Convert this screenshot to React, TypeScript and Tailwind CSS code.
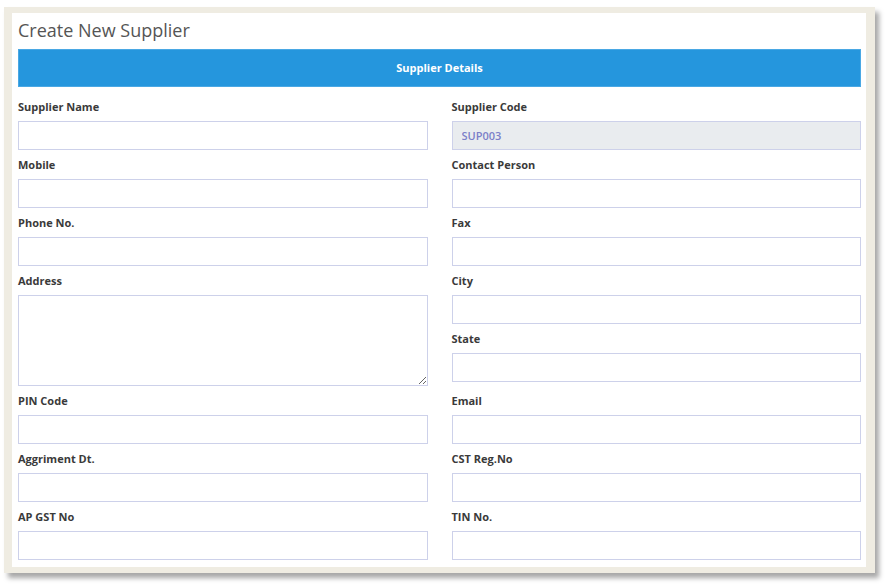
import React from "react";

function Field({ label, value, disabled }: { label: string; value?: string; disabled?: boolean }) {
  return (
    <div className="flex flex-col">
      <label className="mb-[6px] text-[11px] font-bold leading-[16px] text-[#3a3a3a]">{label}</label>
      <input
        readOnly
        value={value ?? ""}
        className={`h-[29px] w-full border border-[#cdd1ea] px-[9px] text-[11px] outline-none ${
          disabled ? "bg-[#e9ecef] font-semibold text-[#7b7fc8]" : "bg-white text-[#333]"
        }`}
      />
    </div>
  );
}

export default function App() {
  return (
    <div className="min-h-[586px] w-[890px] bg-white pl-[4px] pt-[7px]" style={{ fontFamily: '"Open Sans", "Liberation Sans", sans-serif' }}>
      <div className="h-[566px] w-[871px] bg-[#efece2] pb-[6px] pl-[8px] pr-[9px] pt-[6px] shadow-[4px_5px_5px_rgba(0,0,0,0.35)]">
        <div className="h-full w-full bg-white pl-[6px] pr-[5px]">
          <h1 className="h-[36px] text-[18px] leading-[35px] text-[#555]">Create New Supplier</h1>
          <div className="flex h-[38px] items-center justify-center border border-[#4aa8e4] bg-[#2596dd] text-[11px] font-bold text-white">
            Supplier Details
          </div>
          <div className="grid grid-cols-2 gap-x-[24px] gap-y-[7px] pt-[12px]">
            <Field label="Supplier Name" />
            <Field label="Supplier Code" value="SUP003" disabled />
            <Field label="Mobile" />
            <Field label="Contact Person" />
            <Field label="Phone No." />
            <Field label="Fax" />
            <div className="flex flex-col">
              <label className="mb-[6px] text-[11px] font-bold leading-[16px] text-[#3a3a3a]">Address</label>
              <textarea className="h-[91px] w-full border border-[#cdd1ea] bg-white outline-none" />
            </div>
            <div className="flex flex-col gap-[7px]">
              <Field label="City" />
              <Field label="State" />
            </div>
            <Field label="PIN Code" />
            <Field label="Email" />
            <Field label="Aggriment Dt." />
            <Field label="CST Reg.No" />
            <Field label="AP GST No" />
            <Field label="TIN No." />
          </div>
        </div>
      </div>
    </div>
  );
}
